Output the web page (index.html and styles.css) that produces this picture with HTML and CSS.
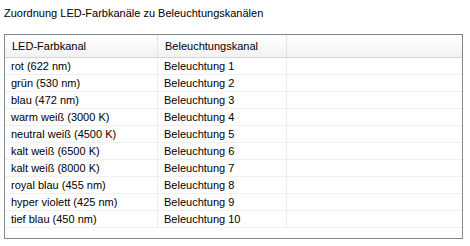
FILE: index.html
```html
<!DOCTYPE html>
<html lang="de">
  <head>
    <meta charset="UTF-8" />
    <title>Zuordnung</title>
    <link rel="stylesheet" href="styles.css">
  </head>
  <body>
    <div class="panel">
      <div class="titel">Zuordnung LED-Farbkanäle zu Beleuchtungskanälen</div>
      <div class="liste">
        <table>
          <thead>
            <tr>
              <th class="sp1">LED-Farbkanal</th>
              <th class="sp2">Beleuchtungskanal</th>
              <th></th>
            </tr>
          </thead>
          <tbody>
            <tr><td>rot (622 nm)</td><td>Beleuchtung 1</td><td></td></tr>
            <tr><td>grün (530 nm)</td><td>Beleuchtung 2</td><td></td></tr>
            <tr><td>blau (472 nm)</td><td>Beleuchtung 3</td><td></td></tr>
            <tr><td>warm weiß (3000 K)</td><td>Beleuchtung 4</td><td></td></tr>
            <tr><td>neutral weiß (4500 K)</td><td>Beleuchtung 5</td><td></td></tr>
            <tr><td>kalt weiß (6500 K)</td><td>Beleuchtung 6</td><td></td></tr>
            <tr><td>kalt weiß (8000 K)</td><td>Beleuchtung 7</td><td></td></tr>
            <tr><td>royal blau (455 nm)</td><td>Beleuchtung 8</td><td></td></tr>
            <tr><td>hyper violett (425 nm)</td><td>Beleuchtung 9</td><td></td></tr>
            <tr><td>tief blau (450 nm)</td><td>Beleuchtung 10</td><td></td></tr>
          </tbody>
        </table>
      </div>
    </div>
  </body>
</html>
```

FILE: styles.css
```css
body {
  margin: 0;
  background-color: white;
  font-family: "Liberation Sans", Arial, sans-serif;
  font-size: 11px;
  color: #000;
}

.panel {
  padding: 7px 7px 0 4px;
}

.titel {
  height: 27px;
  line-height: 13px;
}

.liste {
  border: 1px solid #828790;
  height: 203px;
  overflow: hidden;
}

table {
  width: 100%;
  border-collapse: collapse;
  table-layout: fixed;
}

th {
  height: 22px;
  padding: 0 0 0 7px;
  text-align: left;
  font-weight: normal;
  background: linear-gradient(#ffffff, #f1f2f4);
  border-bottom: 1px solid #d5d5d5;
  border-right: 1px solid #e3e4e6;
}

th:last-child {
  border-right: none;
}

.sp1 {
  width: 145px;
}

.sp2 {
  width: 121px;
}

td {
  height: 16px;
  padding: 0 0 0 6px;
  border-bottom: 1px solid #f0f0f0;
  border-right: 1px solid #ececf4;
  white-space: nowrap;
}

td:last-child {
  border-right: none;
}
```
